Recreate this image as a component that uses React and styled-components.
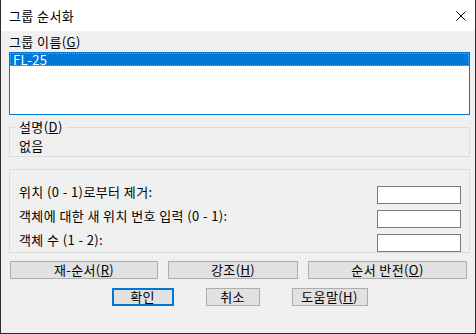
import React from "react";
import styled, { createGlobalStyle } from "styled-components";

const GlobalStyle = createGlobalStyle`
  body {
    margin: 0;
    background: #f0f0f0;
    font-family: "Noto Sans CJK KR", "Noto Sans", "Liberation Sans", sans-serif;
    font-size: 13px;
    letter-spacing: 0.4px;
    color: #000;
  }
`;

const Window = styled.div`
  width: 476px;
  height: 334px;
  box-sizing: border-box;
  border: 1px solid #2b2b2b;
  border-top: none;
  background: #f0f0f0;
  display: flex;
  flex-direction: column;
`;

const TitleBar = styled.div`
  height: 31px;
  flex-shrink: 0;
  background: #fff;
  display: flex;
  align-items: center;
  justify-content: space-between;
  padding: 0 9px 0 8px;
`;

const Title = styled.span`
  line-height: 14px;
`;

const Body = styled.div`
  display: flex;
  flex-direction: column;
  padding: 0 5px 0 8px;
`;

const FieldLabel = styled.div`
  height: 21px;
  line-height: 21px;
`;

const ListBox = styled.div`
  height: 63px;
  box-sizing: border-box;
  border: 1px solid #0078d7;
  background: #fff;
`;

const ListItem = styled.div`
  height: 13px;
  box-sizing: border-box;
  line-height: 11px;
  padding-left: 2px;
  background: ${(p) => (p.$selected ? "#0078d7" : "transparent")};
  color: ${(p) => (p.$selected ? "#fff" : "#000")};
  border: 1px dotted ${(p) => (p.$selected ? "#f08a24" : "transparent")};
`;

const Group = styled.fieldset`
  margin: 4px 0 0;
  padding: 0 0 1px 6px;
  border: 1px solid #dcdcdc;
  min-width: 0;
`;

const Legend = styled.legend`
  padding: 0 3px;
  line-height: 16px;
`;

const GroupText = styled.div`
  padding: 2px 0 0 3px;
  line-height: 18px;
`;

const Panel = styled.div`
  margin-top: 12px;
  border: 1px solid #dcdcdc;
  padding: 16px 8px 0 9px;
  display: flex;
  flex-direction: column;
  gap: 6px;
`;

const Row = styled.div`
  display: flex;
  justify-content: space-between;
  align-items: flex-start;
`;

const RowLabel = styled.span`
  line-height: 12px;
`;

const NumberInput = styled.input`
  width: 84px;
  height: 18px;
  box-sizing: border-box;
  border: 1px solid #7a7a7a;
  background: #fff;
  margin: 0;
  padding: 0 2px;
  font: inherit;
`;

const ButtonRow = styled.div`
  display: flex;
  margin-top: ${(p) => p.$top}px;
  gap: ${(p) => p.$gap}px;
  justify-content: ${(p) => p.$justify || "flex-start"};
  padding-left: ${(p) => p.$pad || 0}px;
`;

const Button = styled.button`
  width: ${(p) => p.$w}px;
  height: 18px;
  box-sizing: border-box;
  margin: 0;
  padding: 0;
  background: #e1e1e1;
  border: ${(p) => (p.$default ? "2px solid #0078d7" : "1px solid #adadad")};
  font: inherit;
  letter-spacing: inherit;
  line-height: 14px;
  color: #000;
`;

function CloseIcon() {
  return (
    <svg width="10" height="10" viewBox="0 0 10 10">
      <path d="M0.5 0.5 L9.5 9.5 M9.5 0.5 L0.5 9.5" stroke="#000" strokeWidth="1" />
    </svg>
  );
}

export default function App() {
  return (
    <>
      <GlobalStyle />
      <Window>
        <TitleBar>
          <Title>그룹 순서화</Title>
          <CloseIcon />
        </TitleBar>
        <Body>
          <FieldLabel>
            그룹 이름(<u>G</u>)
          </FieldLabel>
          <ListBox>
            <ListItem $selected>FL-25</ListItem>
          </ListBox>

          <Group>
            <Legend>
              설명(<u>D</u>)
            </Legend>
            <GroupText>없음</GroupText>
          </Group>

          <Panel>
            <Row>
              <RowLabel>위치 (0 - 1)로부터 제거:</RowLabel>
              <NumberInput />
            </Row>
            <Row>
              <RowLabel>객체에 대한 새 위치 번호 입력 (0 - 1):</RowLabel>
              <NumberInput />
            </Row>
            <Row>
              <RowLabel>객체 수 (1 - 2):</RowLabel>
              <NumberInput />
            </Row>
          </Panel>

          <ButtonRow $top={8} $gap={10} $pad={1}>
            <Button $w={148}>
              재-순서(<u>R</u>)
            </Button>
            <Button $w={130}>
              강조(<u>H</u>)
            </Button>
            <Button $w={159}>
              순서 반전(<u>O</u>)
            </Button>
          </ButtonRow>
          <ButtonRow $top={9} $gap={32} $justify="center">
            <Button $w={62} $default>
              확인
            </Button>
            <Button $w={54}>취소</Button>
            <Button $w={76}>
              도움말(<u>H</u>)
            </Button>
          </ButtonRow>
        </Body>
      </Window>
    </>
  );
}
